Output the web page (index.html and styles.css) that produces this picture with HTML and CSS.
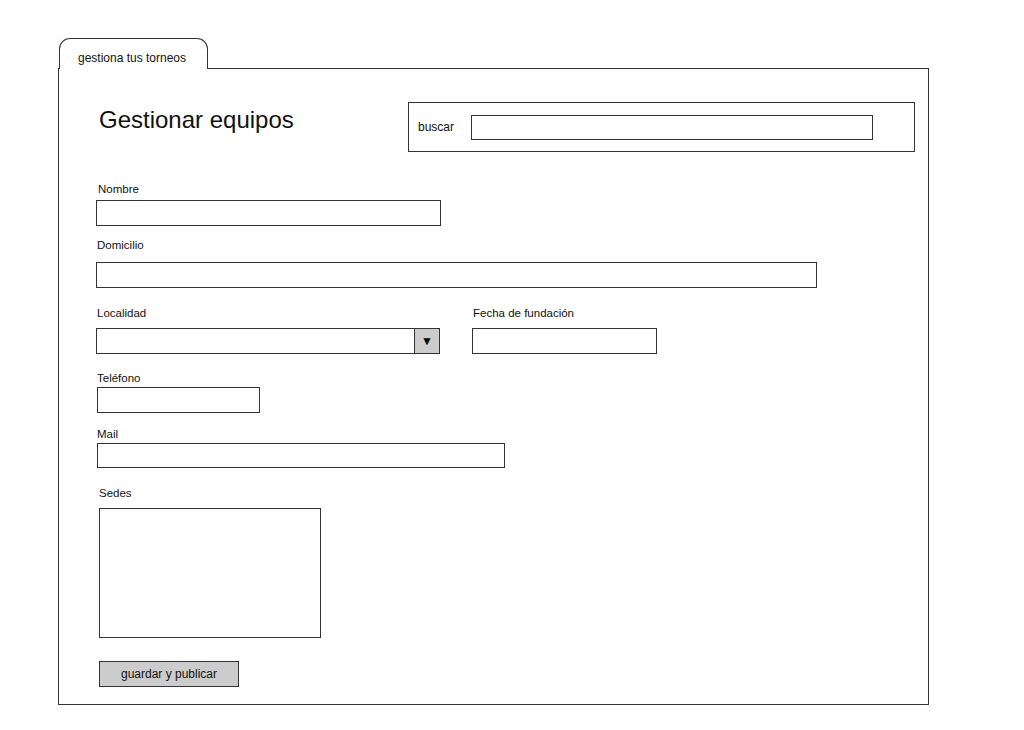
FILE: index.html
```html
<!DOCTYPE html>
<html lang="es">
<head>
<meta charset="utf-8">
<title>Gestionar equipos</title>
<link rel="stylesheet" href="styles.css">
</head>
<body>
<div class="page">
  <div class="tab">gestiona tus torneos</div>
  <div class="frame">
    <div class="header">
      <h1 class="title">Gestionar equipos</h1>
      <div class="search">
        <span class="search-label">buscar</span>
        <div class="box search-input"></div>
      </div>
    </div>

    <div class="field f-nombre">
      <div class="label l-nombre">Nombre</div>
      <div class="box in-nombre"></div>
    </div>

    <div class="field f-domicilio">
      <div class="label">Domicilio</div>
      <div class="box in-domicilio"></div>
    </div>

    <div class="row f-localidad">
      <div class="col col-loc">
        <div class="label">Localidad</div>
        <div class="box select">
          <span class="select-btn">&#9660;</span>
        </div>
      </div>
      <div class="col">
        <div class="label">Fecha de fundación</div>
        <div class="box in-fecha"></div>
      </div>
    </div>

    <div class="field f-telefono">
      <div class="label">Teléfono</div>
      <div class="box in-telefono"></div>
    </div>

    <div class="field f-mail">
      <div class="label">Mail</div>
      <div class="box in-mail"></div>
    </div>

    <div class="field f-sedes">
      <div class="label">Sedes</div>
      <div class="box in-sedes"></div>
    </div>

    <div class="btn">guardar y publicar</div>
  </div>
</div>
</body>
</html>
```

FILE: styles.css
```css
* { box-sizing: border-box; }

body {
  margin: 0;
  background: #ffffff;
  font-family: "Liberation Sans", Arial, sans-serif;
  color: #111;
}

.page {
  padding-top: 38px;
}

.tab {
  margin-left: 59px;
  width: 149px;
  height: 31px;
  border: 1px solid #333;
  border-bottom: none;
  border-radius: 11px 11px 0 0;
  font-size: 12px;
  line-height: 14px;
  padding-top: 12px;
  padding-right: 3px;
  text-align: center;
  position: relative;
  z-index: 1;
  background: #fff;
  margin-bottom: -1px;
}

.frame {
  margin-left: 58px;
  width: 871px;
  height: 637px;
  border: 1px solid #333;
  padding: 33px 0 0 37px;
}

.header {
  display: flex;
  align-items: flex-start;
}

.title {
  margin: 4px 0 0 3px;
  width: 309px;
  font-size: 24px;
  line-height: 28px;
  font-weight: normal;
  white-space: nowrap;
}

.search {
  width: 507px;
  height: 50px;
  border: 1px solid #333;
  display: flex;
  align-items: center;
  padding-left: 9px;
}

.search-label {
  width: 53px;
  font-size: 12px;
}

.search-input {
  width: 402px;
  height: 25px;
  border-color: #666;
}

.box {
  border: 1px solid #333;
  background: #fff;
}

.label {
  font-size: 11.5px;
  line-height: 14px;
  padding-left: 1px;
}

.l-nombre { padding-left: 2px; }

.field, .row { display: flex; flex-direction: column; }
.row { flex-direction: row; gap: 32px; }
.col { display: flex; flex-direction: column; }

.f-nombre { margin-top: 30px; }
.f-nombre .box { margin-top: 4px; }
.in-nombre { width: 345px; height: 26px; }

.f-domicilio { margin-top: 12px; }
.f-domicilio .box { margin-top: 10px; }
.in-domicilio { width: 721px; height: 26px; }

.f-localidad { margin-top: 18px; }
.f-localidad .box { margin-top: 8px; }
.col-loc { width: 344px; }

.select {
  width: 344px;
  height: 26px;
  display: flex;
  justify-content: flex-end;
}

.select-btn {
  width: 25px;
  height: 24px;
  background: #cccccc;
  border-left: 1px solid #333;
  font-size: 12px;
  line-height: 24px;
  text-align: center;
  color: #000;
}

.in-fecha { width: 185px; height: 26px; }

.f-telefono { margin-top: 17px; padding-left: 1px; }
.f-telefono .label { padding-left: 0; }
.f-telefono .box { margin-top: 2px; }
.in-telefono { width: 163px; height: 26px; }

.f-mail { margin-top: 14px; padding-left: 1px; }
.f-mail .label { padding-left: 0; }
.f-mail .box { margin-top: 2px; }
.in-mail { width: 408px; height: 25px; }

.f-sedes { margin-top: 18px; padding-left: 3px; }
.f-sedes .label { padding-left: 0; }
.f-sedes .box { margin-top: 8px; }
.in-sedes { width: 222px; height: 130px; }

.btn {
  margin: 23px 0 0 3px;
  width: 140px;
  height: 26px;
  background: #cccccc;
  border: 1px solid #333;
  font-size: 12px;
  line-height: 25px;
  text-align: center;
}
```
